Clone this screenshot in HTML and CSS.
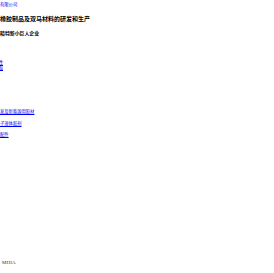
FILE: index.html
```html
<!DOCTYPE html>
<html lang="zh-CN">

<head>
    <meta charset="UTF-8">
    <meta name="viewport" content="width=device-width, initial-scale=1.0">
    <title>橡胶制品及双马材料的研发和生产</title>
    <link rel="stylesheet" href="styles.css">
</head>

<body>
    <div class="page">
        <div class="topbar">
            <a href="#" class="company">有限公司</a>
        </div>

        <div class="intro">
            <h1 class="slogan">橡胶制品及双马材料的研发和生产</h1>
            <p class="honor">精特新小巨人企业</p>
        </div>

        <div class="nav">
            <a href="#" class="nav-item">性</a>
            <a href="#" class="nav-item">面</a>
        </div>

        <ul class="products">
            <li><a href="#">发及新能源用胶材</a></li>
            <li><a href="#">子液体胶剂</a></li>
            <li><a href="#">配件</a></li>
        </ul>

        <div class="footer">MHJA</div>
    </div>
</body>

</html>
```

FILE: styles.css
```css
body {
    margin: 0;
    background-color: #ffffff;
    font-family: 'Noto Sans CJK SC', sans-serif;
    color: #000000;
}

.page {
    height: 273px;
    display: flex;
    flex-direction: column;
}

a {
    color: #0000ee;
}

.topbar {
    padding-top: 1px;
    font-size: 4.3px;
    line-height: 6px;
}

.company {
    text-decoration: none;
}

.intro {
    padding-top: 7px;
}

.slogan {
    margin: 0;
    font-size: 6px;
    line-height: 9px;
    font-weight: bold;
}

.honor {
    margin: 0;
    padding-top: 6px;
    font-size: 4.9px;
    line-height: 7px;
    font-weight: bold;
}

.nav {
    display: flex;
    flex-direction: column;
    padding-top: 23px;
    margin-left: -2px;
}

.nav-item {
    font-size: 5px;
    line-height: 5px;
}

.products {
    list-style: none;
    margin: 0;
    padding: 39px 0 0 0;
    display: flex;
    flex-direction: column;
    gap: 5.5px;
}

.products li {
    font-size: 4.3px;
    line-height: 6px;
}

.footer {
    margin-top: auto;
    margin-bottom: 8px;
    padding-left: 2px;
    font-family: 'Liberation Serif', serif;
    font-size: 5px;
    color: #333333;
}
```
